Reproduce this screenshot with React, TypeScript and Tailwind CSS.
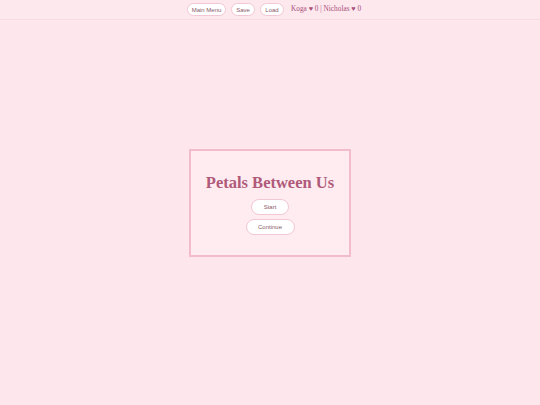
export default function App() {
  return (
    <div className="relative h-[405px] w-[540px] bg-[#fde6ec] font-['Liberation_Sans',Arial,sans-serif]">
      <header className="absolute left-0 right-0 top-0 flex h-[20px] items-center justify-center gap-[5px] border-b border-[#f8dce4] bg-[#fde8ee] pl-[8px]">
        <button className="h-[13px] w-[39px] rounded-full border border-[#f3c7d4] bg-white text-[6px] leading-none text-[#8a5a6a]">Main Menu</button>
        <button className="h-[13px] w-[24px] rounded-full border border-[#f3c7d4] bg-white text-[6px] leading-none text-[#8a5a6a]">Save</button>
        <button className="h-[13px] w-[24px] rounded-full border border-[#f3c7d4] bg-white text-[6px] leading-none text-[#8a5a6a]">Load</button>
        <span className="ml-[2px] w-[70px] whitespace-nowrap font-['Liberation_Serif',serif] text-[7.3px] text-[#a8507a]">Koga ♥ 0 | Nicholas ♥ 0</span>
      </header>
      <main className="flex h-full items-center justify-center">
        <div className="flex h-[108px] w-[162px] flex-col items-center justify-center border-2 border-[#f3bccb] bg-[#feecf1] pt-[5px]">
          <h1 className="font-['Liberation_Serif',serif] text-[16.5px] font-bold leading-none text-[#b05a7a]">Petals Between Us</h1>
          <button className="mt-[8px] h-[16px] w-[38px] rounded-full border border-[#f3c7d4] bg-white text-[6px] leading-none text-[#8a5a6a]">Start</button>
          <button className="mt-[4px] h-[16px] w-[49px] rounded-full border border-[#f3c7d4] bg-white text-[6px] leading-none text-[#8a5a6a]">Continue</button>
        </div>
      </main>
    </div>
  );
}
